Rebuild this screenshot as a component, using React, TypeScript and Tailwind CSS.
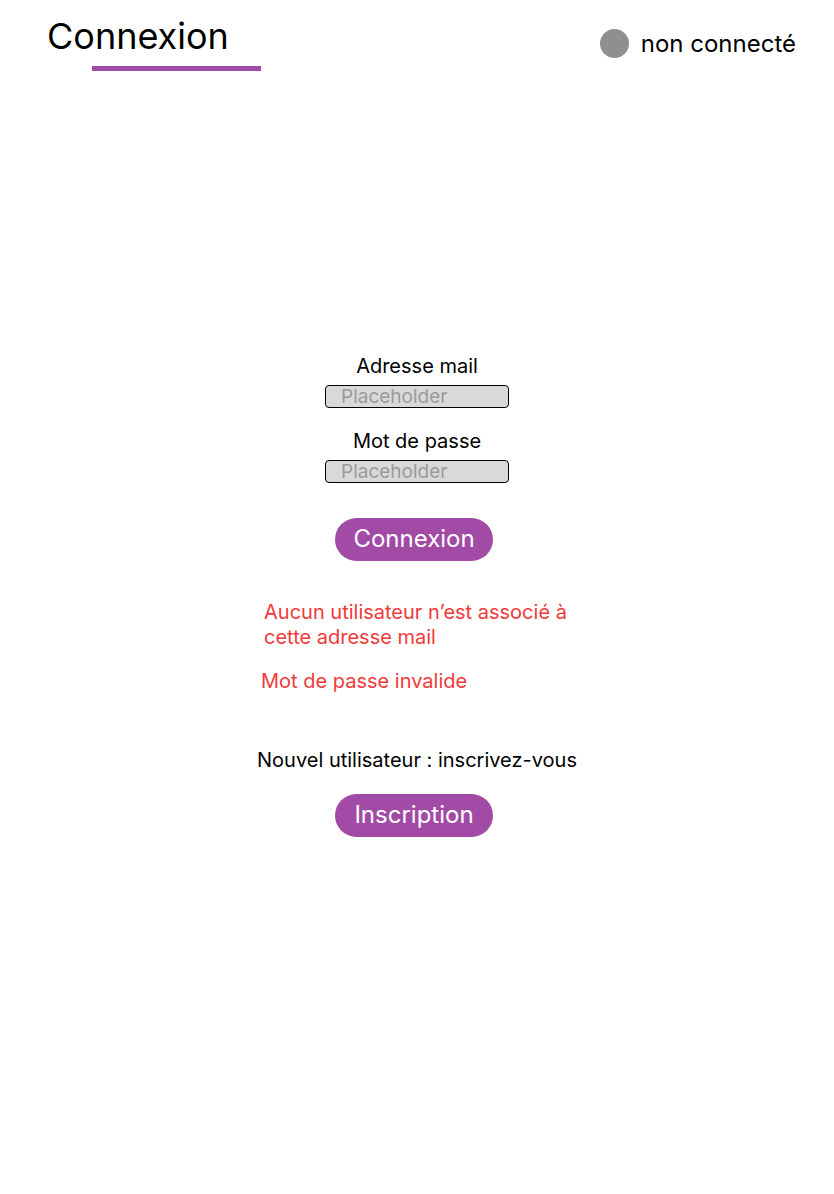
import React from 'react';

const font = { fontFamily: 'Inter, "Noto Sans", sans-serif' };

const Field: React.FC<{ label: string; first?: boolean }> = ({ label, first }) => (
  <div className={`flex flex-col items-center ${first ? '' : 'mt-[21px]'}`}>
    <span className="text-[20px] leading-[24px] text-black">{label}</span>
    <input
      placeholder="Placeholder"
      className="mt-[7px] w-[184px] h-[23px] bg-[#d9d9d9] border border-black rounded-[4px] pl-[15px] text-[19px] leading-[21px] text-black placeholder:text-[#9b9b9b] outline-none"
      style={font}
    />
  </div>
);

const PillButton: React.FC<{ children: React.ReactNode }> = ({ children }) => (
  <button className="w-[158px] h-[43px] rounded-full bg-[#a24ba6] text-white text-[24px] leading-none pb-[2px]" style={font}>
    {children}
  </button>
);

export default function App() {
  return (
    <div className="w-[834px] h-[1194px] bg-white relative" style={font}>
      <header className="flex justify-between items-start">
        <div className="pl-[47px] pt-[14px]">
          <h1 className="text-[36px] leading-[44px] font-normal text-black">Connexion</h1>
          <div className="ml-[45px] mt-[8px] w-[169px] h-[5px] bg-[#a24ba6]" />
        </div>
        <div className="flex items-center pt-[29px] pr-[38px]">
          <div className="w-[29px] h-[29px] rounded-full bg-[#8f8f8f]" />
          <span className="ml-[12px] text-[24px] leading-[28px] text-black">non connecté</span>
        </div>
      </header>

      <main className="flex flex-col items-center pt-[283px]">
        <Field label="Adresse mail" first />
        <Field label="Mot de passe" />

        <div className="mt-[35px] mr-[6px]">
          <PillButton>Connexion</PillButton>
        </div>

        <div className="mt-[39px] w-[318px] text-[#f03a3a] text-[20px] leading-[25px]">
          <p className="pl-[6px]">Aucun utilisateur n’est associé à<br />cette adresse mail</p>
          <p className="pl-[3px] mt-[19px]">Mot de passe invalide</p>
        </div>

        <p className="mt-[54px] text-[20px] leading-[24px] text-black">Nouvel utilisateur : inscrivez-vous</p>

        <div className="mt-[22px] mr-[6px]">
          <PillButton>Inscription</PillButton>
        </div>
      </main>
    </div>
  );
}
